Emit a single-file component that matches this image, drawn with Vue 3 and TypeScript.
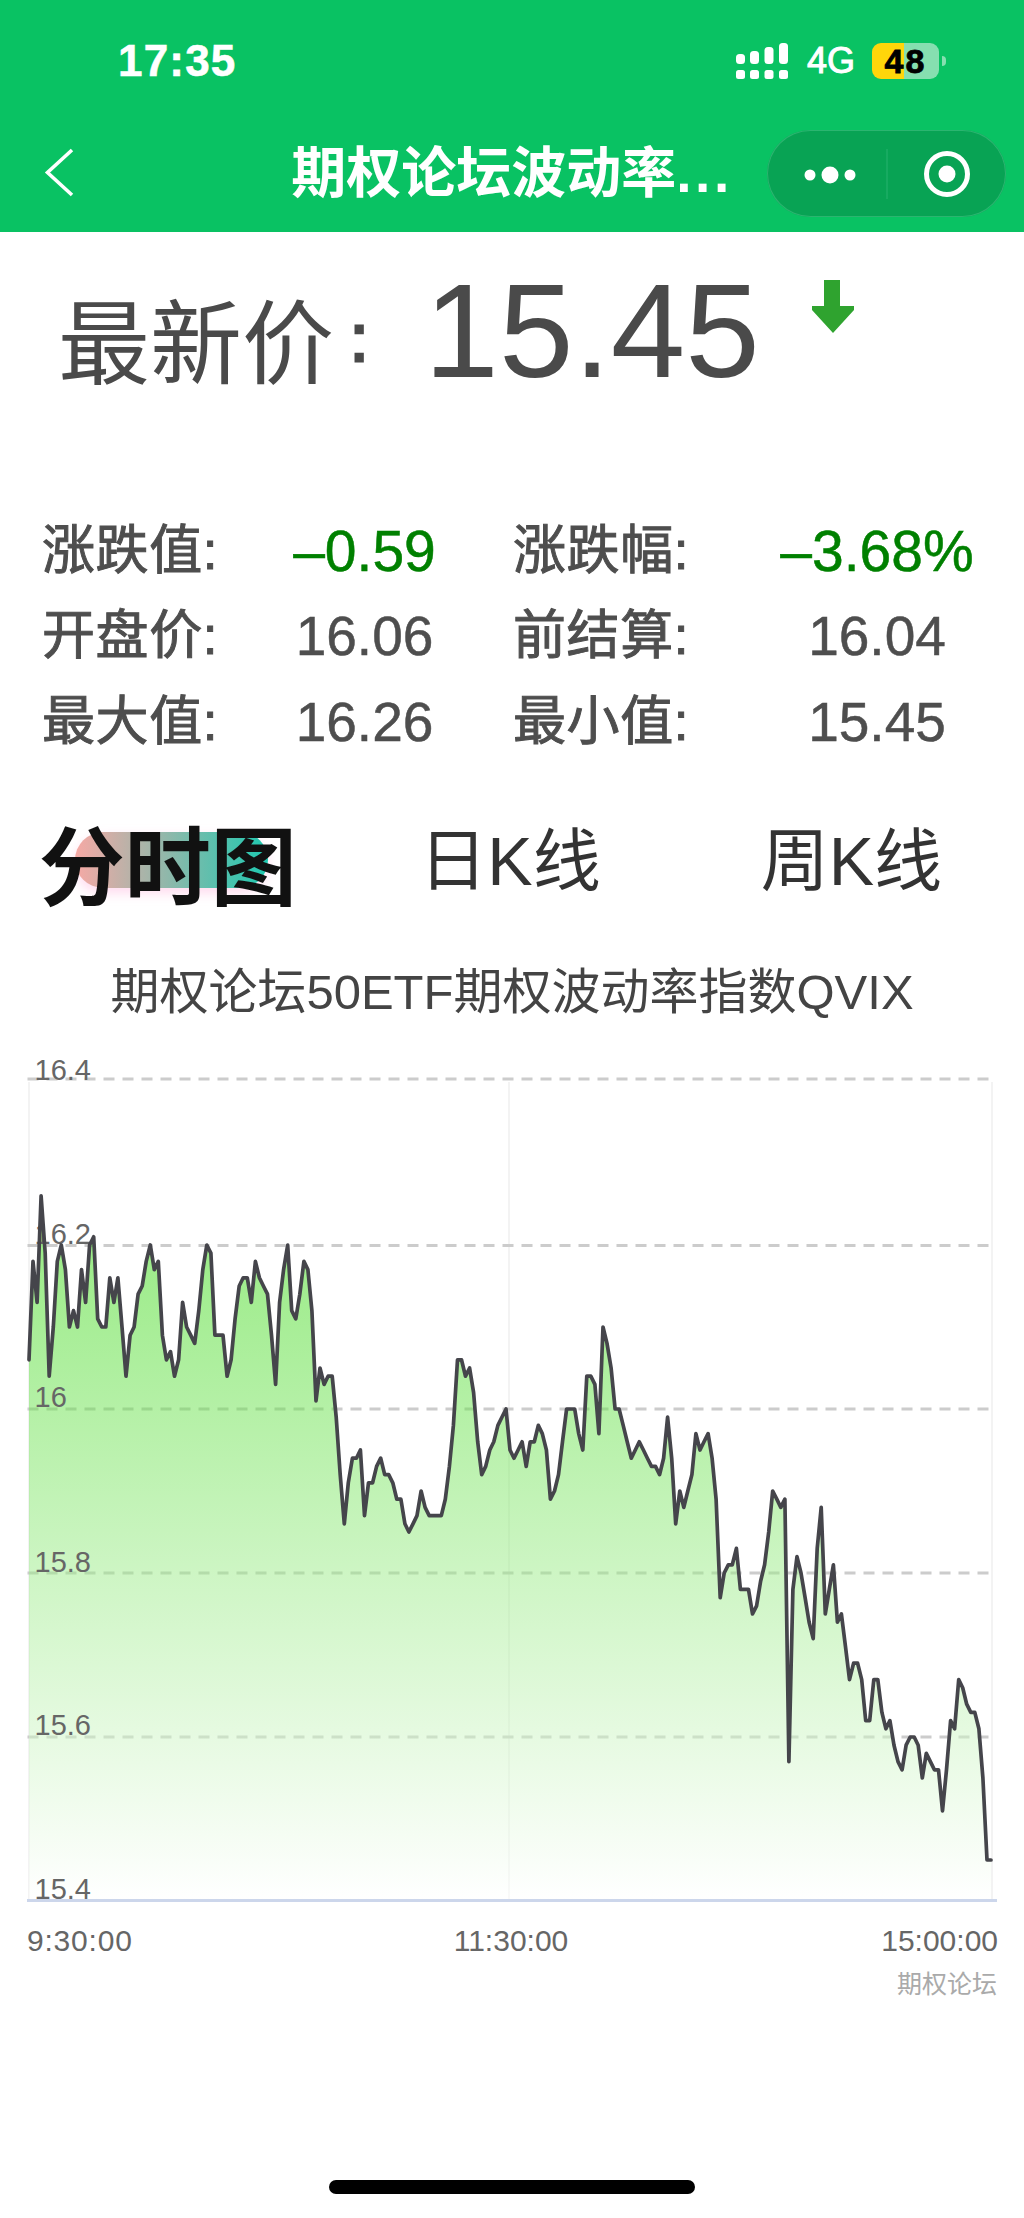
<script setup lang="ts">
// offsets from 16.00, in hundredths, one point every four pixels
const ticks: number[] = [
  6, 18, 13, 26, 19, 4, 10, 18, 20, 17,
  10, 12, 10, 17, 13, 20, 21, 11, 10, 10,
  16, 13, 16, 10, 4, 9, 10, 14, 15, 18,
  20, 17, 18, 9, 6, 7, 4, 6, 13, 10,
  9, 8, 12, 17, 20, 19, 9, 9, 9, 4,
  6, 11, 15, 16, 16, 13, 18, 16, 15, 14,
  9, 3, 13, 17, 20, 12, 11, 14, 18, 17,
  12, 1, 5, 3, 4, 4, -1, -8, -14, -9,
  -6, -6, -5, -13, -9, -9, -7, -6, -8, -8,
  -9, -11, -11, -14, -15, -14, -13, -10, -12, -13,
  -13, -13, -13, -11, -7, -2, 6, 6, 4, 5,
  2, -4, -8, -7, -5, -4, -2, -1, 0, -5,
  -6, -5, -4, -7, -4, -4, -2, -3, -5, -11,
  -10, -8, -4, 0, 0, 0, -3, -5, 4, 4,
  3, -3, 10, 8, 5, 0, 0, -2, -4, -6,
  -5, -4, -5, -6, -7, -7, -8, -6, -1, -6,
  -14, -10, -12, -10, -8, -3, -5, -4, -3, -6,
  -11, -23, -20, -19, -19, -17, -22, -22, -22, -25,
  -24, -21, -19, -15, -10, -11, -12, -11, -43, -22,
  -18, -20, -23, -26, -28, -17, -12, -25, -22, -19,
  -26, -25, -29, -33, -31, -31, -33, -38, -38, -33,
  -33, -37, -39, -38, -41, -43, -44, -41, -40, -40,
  -41, -45, -42, -43, -44, -44, -49, -44, -38, -39,
  -33, -34, -36, -37, -37, -39, -45, -55, -55,
]

const stepX = 962 / (ticks.length - 1)
const toY = (v: number) => +(1410 - v * 8.2).toFixed(1)
const points = ticks.map((v, i) => `${(29 + i * stepX).toFixed(1)},${toY(v)}`)
const linePoints = points.join(' ')
const areaPoints = `29,1901 ${linePoints} 991,1901`

const gridLines = [1080, 1246.5, 1410, 1574, 1738]
const yLabels = [
  { text: '16.4', y: 1081 },
  { text: '16.2', y: 1245 },
  { text: '16', y: 1408 },
  { text: '15.8', y: 1573 },
  { text: '15.6', y: 1736 },
  { text: '15.4', y: 1900 },
]

const stats = [
  { label: '涨跌值:', value: '–0.59', down: true },
  { label: '涨跌幅:', value: '–3.68%', down: true },
  { label: '开盘价:', value: '16.06', down: false },
  { label: '前结算:', value: '16.04', down: false },
  { label: '最大值:', value: '16.26', down: false },
  { label: '最小值:', value: '15.45', down: false },
]

const signalX = [737, 751, 765.5, 780]
const signalTop = [53, 50, 46, 42]
</script>

<template>
  <div class="page">
    <header class="header">
      <div class="status-bar">
        <span class="time">17:35</span>
        <div class="status-right">
          <svg class="signal" width="53" height="36" viewBox="737 42 53 36">
            <g v-for="(x, i) in signalX" :key="x" fill="#fff">
              <rect :x="x" :y="signalTop[i]" width="9" :height="63 - signalTop[i]" rx="3.5" />
              <rect :x="x" y="69" width="9" height="9" rx="2.5" />
            </g>
          </svg>
          <span class="network">4G</span>
          <div class="battery">
            <span class="battery-num">48</span>
          </div>
          <span class="battery-cap"></span>
        </div>
      </div>
      <nav class="nav">
        <svg class="back" width="30" height="50" viewBox="44 147 30 50">
          <path d="M72 149 L47.5 171.5 L72 194" fill="none" stroke="#fff" stroke-width="3.6" />
        </svg>
        <h1 class="title">期权论坛波动率<span class="ellipsis">...</span></h1>
        <div class="capsule">
          <svg width="239" height="87" viewBox="767 128 239 87">
            <circle cx="810" cy="173" r="5.5" fill="#fff" />
            <circle cx="830" cy="173" r="8.5" fill="#fff" />
            <circle cx="850" cy="173" r="5.5" fill="#fff" />
            <line x1="887" y1="147" x2="887" y2="197" stroke="#22b06b" stroke-width="1.2" />
            <circle cx="947" cy="172" r="20.5" fill="none" stroke="#fff" stroke-width="5" />
            <circle cx="947" cy="172" r="8.5" fill="#fff" />
          </svg>
        </div>
      </nav>
    </header>

    <section class="price-row">
      <span class="price-label">最新价</span>
      <span class="price-colon">:</span>
      <span class="price-value">15.45</span>
      <svg class="price-arrow" width="42" height="53" viewBox="0 0 42 53">
        <path d="M12 0 H28 V26 H42 V30 L21 53 L0 30 V26 H12 Z" fill="#2fa32f" />
      </svg>
    </section>

    <section class="stats">
      <template v-for="s in stats" :key="s.label">
        <span class="stat-label">{{ s.label }}</span>
        <span class="stat-value" :class="{ down: s.down }">{{ s.value }}</span>
      </template>
    </section>

    <section class="tabs">
      <div class="tab active"><span class="tab-pill"></span><span class="tab-text">分时图</span></div>
      <div class="tab">日K线</div>
      <div class="tab">周K线</div>
    </section>

    <div class="chart-title">期权论坛50ETF期权波动率指数QVIX</div>

    <svg class="chart" width="1024" height="970" viewBox="0 1040 1024 970">
      <defs>
        <linearGradient id="area" gradientUnits="userSpaceOnUse" x1="0" y1="1197" x2="0" y2="1901">
          <stop offset="0" stop-color="#29d500" stop-opacity="0.5" />
          <stop offset="1" stop-color="#ffffff" stop-opacity="0.5" />
        </linearGradient>
      </defs>
      <g stroke="#f3f3f3" stroke-width="2">
        <line x1="29" y1="1083" x2="29" y2="1900" />
        <line x1="509" y1="1083" x2="509" y2="1900" />
        <line x1="992" y1="1083" x2="992" y2="1900" />
      </g>
      <line
        v-for="y in gridLines"
        :key="y"
        x1="27.5"
        x2="993"
        :y1="y"
        :y2="y"
        stroke="#ccc"
        stroke-width="3"
        stroke-dasharray="11 8"
      />
      <polygon :points="areaPoints" fill="url(#area)" />
      <text v-for="l in yLabels" :key="l.text" class="tick" x="34.5" :y="l.y">{{ l.text }}</text>
      <polyline :points="linePoints" fill="none" stroke="#45454b" stroke-width="3.7" stroke-linejoin="round" stroke-linecap="round" />
      <line x1="27" y1="1901.5" x2="997" y2="1901.5" stroke="#ccd6eb" stroke-width="3" />
      <text class="axis first" x="27" y="1952">9:30:00</text>
      <text class="axis" x="511" y="1952" text-anchor="middle">11:30:00</text>
      <text class="axis" x="998" y="1952" text-anchor="end">15:00:00</text>
      <text class="credit" x="997" y="1994" text-anchor="end">期权论坛</text>
    </svg>

    <div class="home-bar"></div>
  </div>
</template>

<style>
html,
body {
  margin: 0;
  background: #fff;
}
</style>

<style scoped>
.page {
  width: 1024px;
  height: 2218px;
  overflow: hidden;
  background: #fff;
  font-family: "Liberation Sans", "Noto Sans CJK SC", sans-serif;
}

.header {
  height: 232px;
  background: #09c263;
  color: #fff;
}

.status-bar {
  height: 122px;
  display: flex;
  align-items: center;
  justify-content: space-between;
  padding-left: 118px;
  padding-right: 78px;
}

.time {
  font-size: 44px;
  font-weight: 700;
  letter-spacing: 1.2px;
  -webkit-text-stroke: 0.6px #fff;
}

.status-right {
  display: flex;
  align-items: center;
  position: relative;
}

.network {
  margin-left: 18px;
  font-size: 36px;
  line-height: 40px;
  -webkit-text-stroke: 1px #fff;
}

.battery {
  position: relative;
  width: 67px;
  height: 36px;
  margin-left: 17px;
  border-radius: 9px;
  background: linear-gradient(90deg, #ffd60a 0 32px, #86dfb0 32px);
}

.battery-num {
  display: block;
  text-align: center;
  color: #000;
  font-size: 34px;
  line-height: 36px;
  font-weight: 700;
  letter-spacing: 2px;
  -webkit-text-stroke: 0.8px #000;
}

.battery-cap {
  width: 4px;
  height: 10px;
  margin-left: 3px;
  border-radius: 0 5px 5px 0;
  background: #86dfb0;
}

.nav {
  height: 102px;
  display: grid;
  grid-template-columns: 1fr auto 1fr;
  align-items: center;
  padding: 0 18px 0 44px;
}

.back {
  display: block;
}

.title {
  margin: 0 0 0 -26px;
  font-size: 55px;
  line-height: 60px;
  font-weight: 700;
  white-space: nowrap;
}

.ellipsis {
  font-weight: 700;
  letter-spacing: 3.5px;
}

.capsule {
  justify-self: end;
  width: 239px;
  height: 87px;
  border-radius: 44px;
  background: #08a354;
  box-shadow: inset 0 0 0 1px #2bb570;
}

.capsule svg {
  display: block;
}

.price-row {
  height: 184px;
  padding-left: 58px;
  display: flex;
  align-items: baseline;
  color: #4a4a4a;
}

.price-label {
  font-size: 92px;
  line-height: 198px;
}

.price-colon {
  font-size: 66px;
  margin-left: 16px;
  position: relative;
  top: -16px;
  -webkit-text-stroke: 3px #4a4a4a;
}

.price-value {
  margin-left: 56px;
  font-size: 134px;
  line-height: 198px;
}

.price-arrow {
  align-self: flex-start;
  margin-top: 48px;
  margin-left: 52px;
}

.stats {
  margin-top: 92px;
  padding-left: 42px;
  display: grid;
  grid-template-columns: 174px 297px 217px 1fr;
  grid-auto-rows: 85.5px;
  align-items: center;
  color: #4e4e4e;
}

.stat-label {
  font-size: 53px;
  line-height: 60px;
  white-space: nowrap;
  letter-spacing: 0.6px;
  -webkit-text-stroke: 1px #4e4e4e;
}

.stat-value {
  text-align: center;
  font-size: 55px;
  line-height: 60px;
  -webkit-text-stroke: 0.5px #4e4e4e;
}

.stat-value.down {
  color: #008000;
  font-size: 57px;
  -webkit-text-stroke: 0.5px #008000;
}

.tabs {
  margin-top: 22px;
  display: grid;
  grid-template-columns: repeat(3, 1fr);
  height: 100px;
  color: #333;
  font-size: 68px;
}

.tab {
  display: flex;
  align-items: center;
  justify-content: center;
  padding-right: 4px;
}

.tab.active {
  position: relative;
  margin-right: 2px;
  padding-top: 12px;
  color: #111;
  font-size: 86px;
  font-weight: 700;
}

.tab-pill {
  position: absolute;
  left: 75px;
  top: 45px;
  width: 193px;
  height: 56px;
  border-radius: 28px;
  background: linear-gradient(90deg, #f6a9a5, #1fc8b0);
  box-shadow: 0 5px 12px rgba(255, 150, 205, 0.35);
}

.tab-text {
  position: relative;
}

.chart-title {
  margin-top: 75px;
  text-align: center;
  color: #444;
  font-size: 49px;
  line-height: 60px;
  white-space: nowrap;
}

.chart {
  display: block;
  margin-top: 17px;
}

.tick {
  font-size: 29px;
  fill: #666;
}

.axis {
  font-size: 30px;
  fill: #666;
}

.axis.first {
  letter-spacing: 0.8px;
}

.credit {
  font-size: 25px;
  fill: #aaa;
}

.home-bar {
  width: 366px;
  height: 14px;
  margin: 171px auto 0;
  border-radius: 7px;
  background: #000;
}
</style>
